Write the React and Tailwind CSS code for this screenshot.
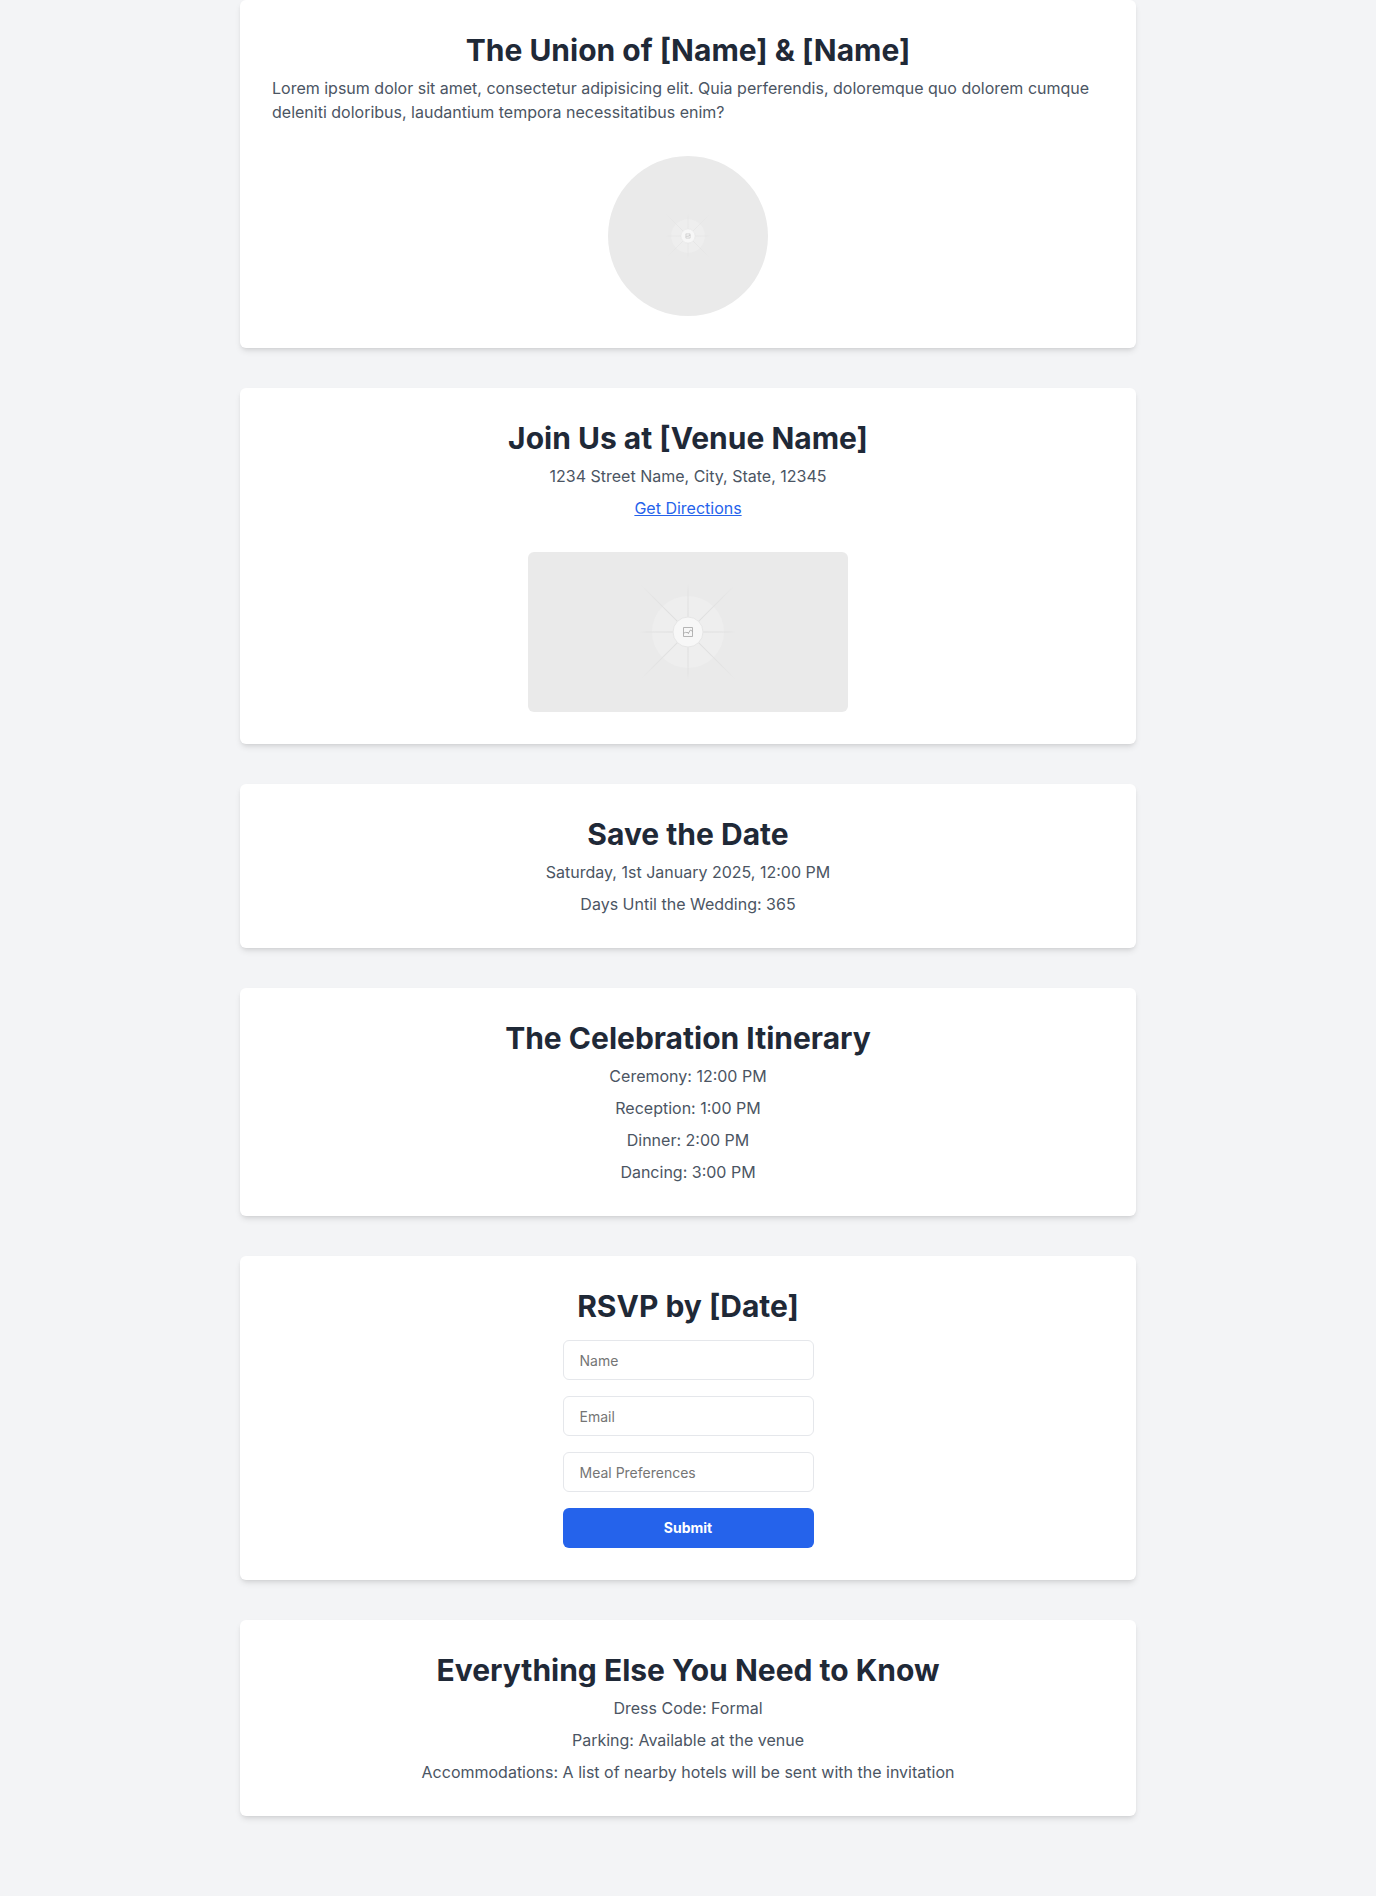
import React, { useId } from "react";

function Card({ title, children }) {
  return (
    <section className="flex w-full max-w-4xl flex-col items-center rounded-md bg-white p-8 shadow-md">
      <h2 className="text-center text-3xl font-bold text-[#1f2937]">{title}</h2>
      {children}
    </section>
  );
}

function Line({ children }) {
  return <p className="mt-2 text-base text-[#4b5563]">{children}</p>;
}

function Placeholder({ label, viewBox, className }) {
  const id = useId();
  const straight = [0, 90, 180, 270];
  const diagonal = [45, 135, 225, 315];
  return (
    <svg role="img" aria-label={label} viewBox={viewBox} className={className}>
      <defs>
        <radialGradient id={`${id}-straight`} gradientUnits="userSpaceOnUse" cx="0" cy="0" r="48">
          <stop offset="0.3" stopColor="#dedede" />
          <stop offset="0.85" stopColor="#e2e2e2" />
          <stop offset="1" stopColor="#eaeaea" />
        </radialGradient>
        <radialGradient id={`${id}-diagonal`} gradientUnits="userSpaceOnUse" cx="0" cy="0" r="67">
          <stop offset="0.2" stopColor="#dedede" />
          <stop offset="0.7" stopColor="#e3e3e3" />
          <stop offset="1" stopColor="#eaeaea" />
        </radialGradient>
      </defs>
      <circle r="36" fill="#eeeeee" />
      {straight.map((angle) => (
        <path
          key={angle}
          d="M15 0H48"
          transform={`rotate(${angle})`}
          stroke={`url(#${id}-straight)`}
          fill="none"
        />
      ))}
      {diagonal.map((angle) => (
        <path
          key={angle}
          d="M15 0H67"
          transform={`rotate(${angle})`}
          stroke={`url(#${id}-diagonal)`}
          fill="none"
        />
      ))}
      <circle r="15" fill="#f7f7f7" stroke="#e6e6e6" />
      <g fill="none" stroke="#a3a3a3" strokeWidth="0.8">
        <path d="M-4.5 -4.5H4.5V4.5H-4.5Z" />
        <path d="M-4.5 1.2L-2.5 0.4L0.8 0.8L2.2 -1.8H3.2L4.5 -0.2" />
        <path d="M-0.5 0.6L0.8 1.8" />
      </g>
    </svg>
  );
}

function Field({ id, label, type }) {
  return (
    <input
      id={id}
      name={id}
      type={type}
      placeholder={label}
      aria-label={label}
      className="h-10 w-full rounded-md border border-[#e5e7eb] bg-white px-4 text-sm text-[#1f2937] placeholder:text-[#757575]"
    />
  );
}

export default function App() {
  return (
    <main className="flex min-h-screen flex-col items-center gap-10 bg-[#f3f4f6] pb-20 font-['Inter',sans-serif]">
      <Card title="The Union of [Name] & [Name]">
        <Line>
          Lorem ipsum dolor sit amet, consectetur adipisicing elit. Quia perferendis, doloremque quo
          dolorem cumque deleniti doloribus, laudantium tempora necessitatibus enim?
        </Line>
        <Placeholder
          label="Couple"
          viewBox="-171 -171 342 342"
          className="mt-8 size-40 rounded-full bg-[#eaeaea]"
        />
      </Card>

      <Card title="Join Us at [Venue Name]">
        <Line>1234 Street Name, City, State, 12345</Line>
        <a href="#directions" className="mt-2 text-base text-[#2563eb] underline">
          Get Directions
        </a>
        <Placeholder
          label="Venue"
          viewBox="-160 -80 320 160"
          className="mt-8 h-40 w-80 rounded-md bg-[#eaeaea]"
        />
      </Card>

      <Card title="Save the Date">
        <Line>Saturday, 1st January 2025, 12:00 PM</Line>
        <Line>Days Until the Wedding: 365</Line>
      </Card>

      <Card title="The Celebration Itinerary">
        <Line>Ceremony: 12:00 PM</Line>
        <Line>Reception: 1:00 PM</Line>
        <Line>Dinner: 2:00 PM</Line>
        <Line>Dancing: 3:00 PM</Line>
      </Card>

      <Card title="RSVP by [Date]">
        <form className="mt-4 flex w-full max-w-[251px] flex-col gap-4">
          <Field id="name" label="Name" type="text" />
          <Field id="email" label="Email" type="email" />
          <Field id="meal" label="Meal Preferences" type="text" />
          <button
            type="submit"
            className="h-10 rounded-md bg-[#2563eb] px-4 text-sm font-bold text-white"
          >
            Submit
          </button>
        </form>
      </Card>

      <Card title="Everything Else You Need to Know">
        <Line>Dress Code: Formal</Line>
        <Line>Parking: Available at the venue</Line>
        <Line>Accommodations: A list of nearby hotels will be sent with the invitation</Line>
      </Card>
    </main>
  );
}
